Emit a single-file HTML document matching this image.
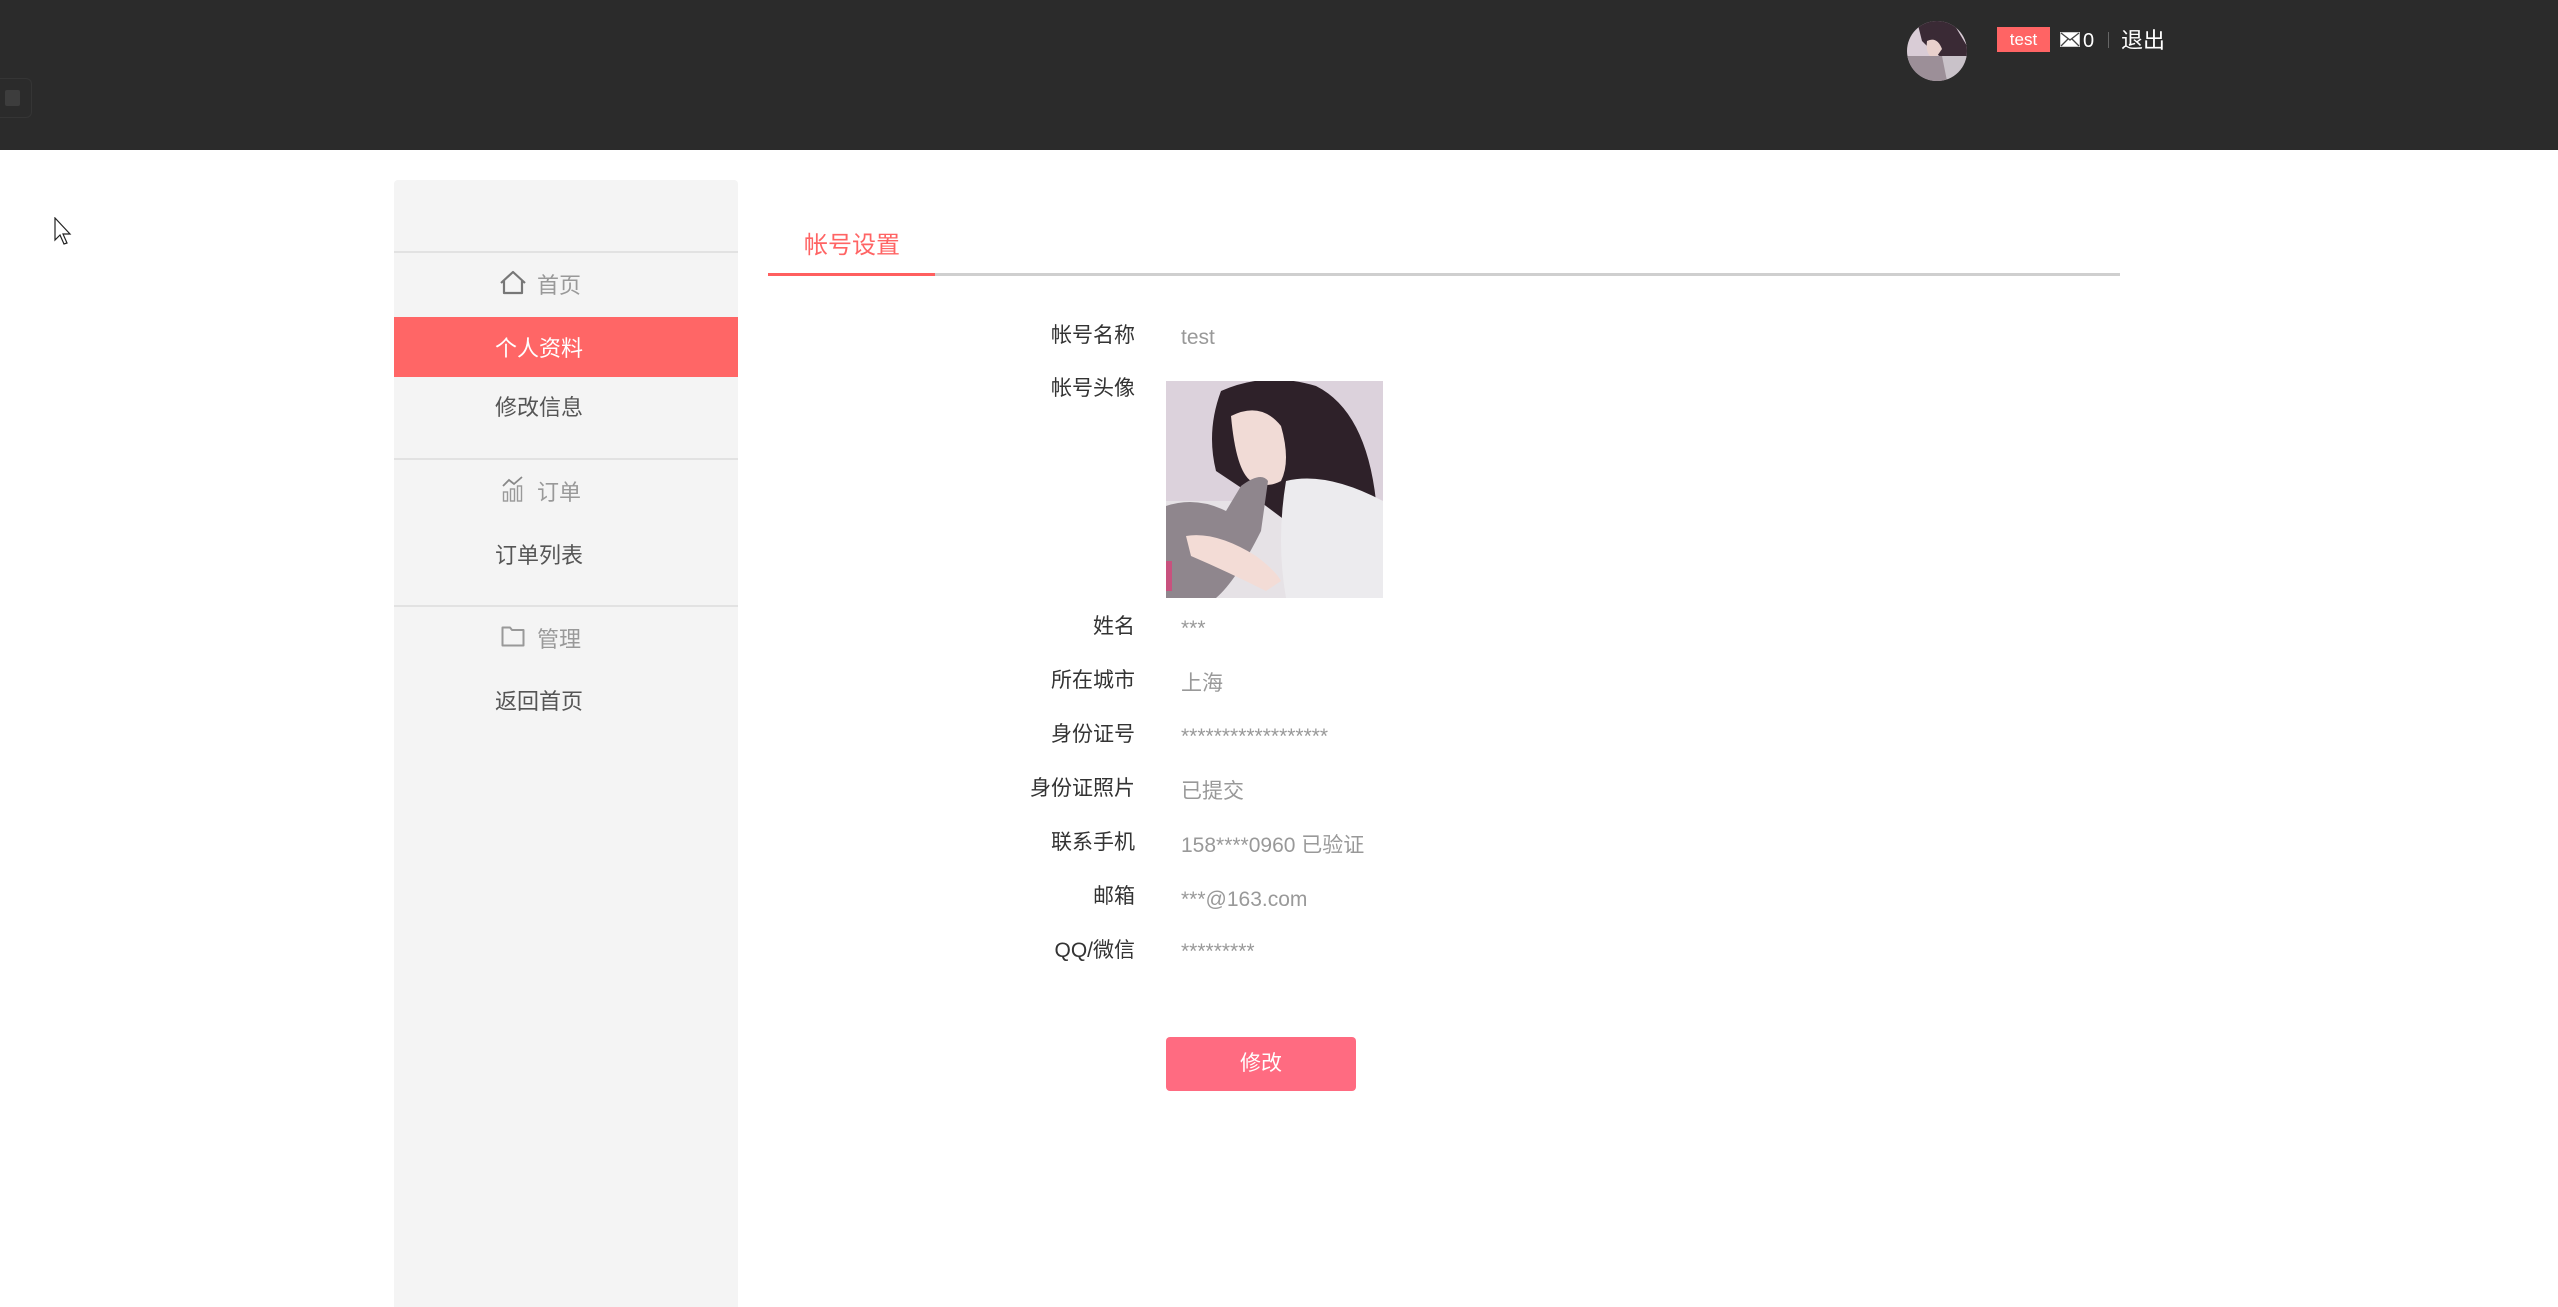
<!DOCTYPE html>
<html><head><meta charset="utf-8">
<style>
*{margin:0;padding:0;box-sizing:border-box}
body{width:2558px;height:1307px;overflow:hidden;background:#fff;position:relative;font-family:"Liberation Sans","Noto Sans CJK SC",sans-serif}
.a{position:absolute;white-space:nowrap}
.hd{position:absolute;left:0;top:0;width:2558px;height:150px;background:#2b2b2b}
.sb{position:absolute;left:394px;top:180px;width:344px;height:1127px;background:#f4f4f4;border-radius:4px 4px 0 0}
.ln{position:absolute;left:394px;width:344px;height:2px;background:#e2e2e2}
.it{position:absolute;left:495px;font-size:22px;color:#555;line-height:30px}
.gh{position:absolute;left:537px;font-size:22px;color:#999;line-height:30px}
.lb{position:absolute;right:1423px;font-size:21px;color:#333;line-height:30px;text-align:right}
.v{position:absolute;left:1181px;font-size:21px;color:#999;line-height:30px}
</style></head><body>
<div class="hd"></div>
<div class="a" style="left:0;top:78px;width:32px;height:40px;border:1px solid #353535;border-left:none;border-radius:0 6px 6px 0"></div>
<div class="a" style="left:5px;top:90px;width:15px;height:16px;background:#3d3d3d;border-radius:2px"></div>
<svg class="a" style="left:1907px;top:21px" width="60" height="60" viewBox="0 0 60 60">
<defs><clipPath id="c"><circle cx="30" cy="30" r="30"/></clipPath></defs>
<g clip-path="url(#c)"><rect width="60" height="60" fill="#d9ccd6"/>
<path d="M10 0 L45 0 L60 25 L60 45 L40 40 L25 30 L15 20Z" fill="#3a2a35"/>
<path d="M20 20 Q30 15 35 28 L28 38 Q18 35 20 20Z" fill="#e8d0cc"/>
<path d="M0 35 L35 35 L45 60 L0 60Z" fill="#9c8f98"/>
<path d="M35 35 L60 35 L60 60 L40 60Z" fill="#c9c2c9"/></g></svg>
<div class="a" style="left:1997px;top:27px;width:53px;height:25px;background:#ff6464;color:#fff;font-size:17px;line-height:25px;text-align:center">test</div>
<svg class="a" style="left:2060px;top:32px" width="20" height="15" viewBox="0 0 20 15"><rect x="0.5" y="0.5" width="19" height="14" fill="#fff" stroke="#ccc"/><path d="M1 1 L10 8 L19 1 M1 14 L8 7 M19 14 L12 7" stroke="#444" stroke-width="1.3" fill="none"/></svg>
<div class="a" style="left:2083px;top:28px;color:#fff;font-size:20px;line-height:26px">0</div>
<div class="a" style="left:2108px;top:32px;width:1px;height:16px;background:#666"></div>
<div class="a" style="left:2121px;top:26px;color:#fff;font-size:22px;line-height:30px">退出</div>
<svg class="a" style="left:54px;top:217px" width="22" height="30" viewBox="0 0 22 30"><path d="M1 1 L1 23 L6 18 L10 27 L13 26 L9 17 L16 17Z" fill="#fff" stroke="#222" stroke-width="1.2"/></svg>

<div class="sb"></div>
<div class="ln" style="top:251px"></div>
<div class="ln" style="top:458px"></div>
<div class="ln" style="top:605px"></div>
<div class="a" style="left:394px;top:317px;width:344px;height:60px;background:#ff6666"></div>
<svg class="a" style="left:499px;top:270px" width="28" height="25" viewBox="0 0 28 25"><path d="M2 13 L14 2 L26 13 M5 10 L5 23 L23 23 L23 10" fill="none" stroke="#777" stroke-width="2.2" stroke-linejoin="round"/></svg>
<div class="gh" style="top:271px">首页</div>
<div class="it" style="top:334px;color:#fff">个人资料</div>
<div class="it" style="top:393px">修改信息</div>
<svg class="a" style="left:502px;top:476px" width="22" height="26" viewBox="0 0 22 26"><path d="M1 10 L7 4 L12 8 L20 1" fill="none" stroke="#888" stroke-width="1.8"/><rect x="1.5" y="16" width="4" height="9" fill="none" stroke="#999" stroke-width="1.4"/><rect x="8.5" y="13" width="4" height="12" fill="none" stroke="#999" stroke-width="1.4"/><rect x="15.5" y="10" width="4" height="15" fill="none" stroke="#999" stroke-width="1.4"/></svg>
<div class="gh" style="top:478px">订单</div>
<div class="it" style="top:541px">订单列表</div>
<svg class="a" style="left:501px;top:626px" width="24" height="21" viewBox="0 0 24 21"><path d="M1.5 1.5 L9 1.5 L11 4 L22.5 4 L22.5 19.5 L1.5 19.5Z" fill="none" stroke="#999" stroke-width="2" stroke-linejoin="round"/></svg>
<div class="gh" style="top:625px">管理</div>
<div class="it" style="top:687px">返回首页</div>

<div class="a" style="left:804px;top:231px;font-size:24px;color:#ff6464;line-height:30px">帐号设置</div>
<div class="a" style="left:768px;top:273px;width:1352px;height:3px;background:#cfcfcf"></div>
<div class="a" style="left:768px;top:273px;width:167px;height:3px;background:#ff5f5f"></div>

<div class="lb" style="top:321px">帐号名称</div><div class="v" style="top:323px">test</div>
<div class="lb" style="top:374px">帐号头像</div>
<svg class="a" style="left:1166px;top:381px" width="217" height="217" viewBox="0 0 217 217">
<rect width="217" height="217" fill="#dcd2dc"/>
<rect y="120" width="217" height="97" fill="#e6e2e6"/>
<path d="M55 10 Q100 -10 150 5 Q200 30 210 120 L217 160 L160 175 L120 140 L80 110 L50 90 Q40 50 55 10Z" fill="#2e2129"/>
<path d="M65 35 Q95 20 115 45 Q125 80 115 100 Q100 108 85 100 Q70 90 65 35Z" fill="#f1dbd6"/>
<path d="M120 100 Q160 90 217 120 L217 217 L120 217 Q110 160 120 100Z" fill="#ecebee"/>
<path d="M0 125 Q30 115 60 130 L75 105 Q95 90 102 100 L95 150 Q70 200 50 217 L0 217Z" fill="#8f868d"/>
<path d="M20 155 Q50 150 90 175 Q110 190 115 200 L100 210 Q60 190 25 175Z" fill="#f3dcd6"/>
<rect x="0" y="180" width="6" height="30" fill="#c8517e"/>
</svg>
<div class="lb" style="top:612px">姓名</div><div class="v" style="top:614px">***</div>
<div class="lb" style="top:666px">所在城市</div><div class="v" style="top:669px">上海</div>
<div class="lb" style="top:720px">身份证号</div><div class="v" style="top:722px">******************</div>
<div class="lb" style="top:774px">身份证照片</div><div class="v" style="top:777px">已提交</div>
<div class="lb" style="top:828px">联系手机</div><div class="v" style="top:831px">158****0960 已验证</div>
<div class="lb" style="top:882px">邮箱</div><div class="v" style="top:885px">***@163.com</div>
<div class="lb" style="top:936px">QQ/微信</div><div class="v" style="top:937px">*********</div>

<div class="a" style="left:1166px;top:1037px;width:190px;height:54px;background:#ff6b81;border-radius:4px;color:#fff;font-size:21px;line-height:54px;text-align:center">修改</div>
</body></html>
